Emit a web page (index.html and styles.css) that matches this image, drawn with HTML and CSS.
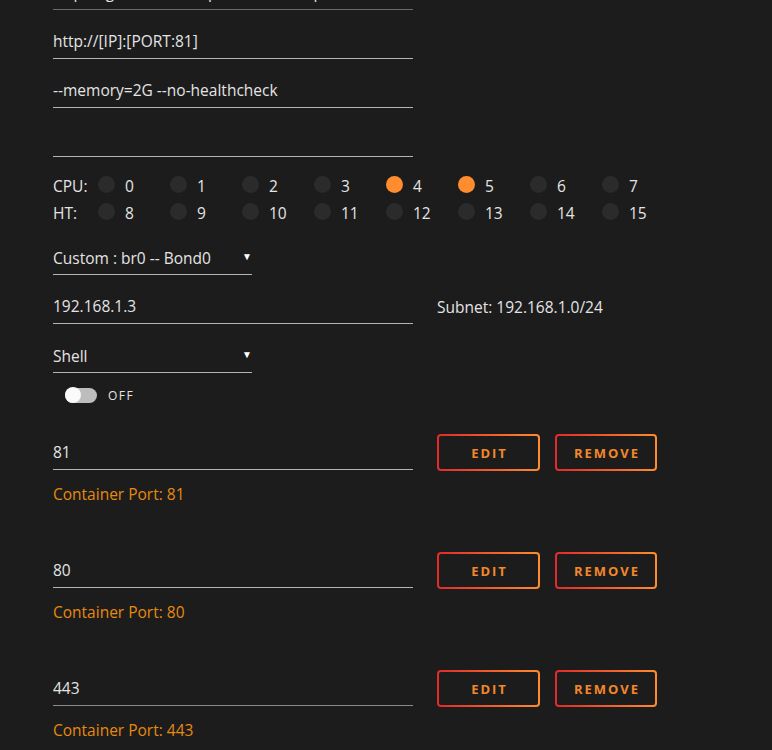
FILE: index.html
```html
<!DOCTYPE html>
<html>
<head>
<meta charset="utf-8">
<link rel="stylesheet" href="styles.css">
</head>
<body>
<div class="page">
  <div class="field dim first"><span class="val">https://github.com/repo/unraid-templates/raw/master/img/icon.png</span></div>
  <div class="field"><span class="val">http://[IP]:[PORT:81]</span></div>
  <div class="field"><span class="val">--memory=2G --no-healthcheck</span></div>
  <div class="field"><span class="val"></span></div>

  <div class="cpus">
    <div class="cpu-row">
      <span class="cpu-label">CPU:</span>
      <span class="core"><i class="dot"></i>0</span>
      <span class="core"><i class="dot"></i>1</span>
      <span class="core"><i class="dot"></i>2</span>
      <span class="core"><i class="dot"></i>3</span>
      <span class="core"><i class="dot on"></i>4</span>
      <span class="core"><i class="dot on"></i>5</span>
      <span class="core"><i class="dot"></i>6</span>
      <span class="core"><i class="dot"></i>7</span>
    </div>
    <div class="cpu-row">
      <span class="cpu-label">HT:</span>
      <span class="core"><i class="dot"></i>8</span>
      <span class="core"><i class="dot"></i>9</span>
      <span class="core"><i class="dot"></i>10</span>
      <span class="core"><i class="dot"></i>11</span>
      <span class="core"><i class="dot"></i>12</span>
      <span class="core"><i class="dot"></i>13</span>
      <span class="core"><i class="dot"></i>14</span>
      <span class="core"><i class="dot"></i>15</span>
    </div>
  </div>

  <div class="field select"><span class="val">Custom : br0 -- Bond0</span><span class="arrow">▼</span></div>
  <div class="row">
    <div class="field"><span class="val">192.168.1.3</span></div>
    <span class="note">Subnet: 192.168.1.0/24</span>
  </div>
  <div class="field select"><span class="val">Shell</span><span class="arrow">▼</span></div>
  <div class="toggle-row">
    <span class="switch"><span class="knob"></span></span>
    <span class="toggle-text">OFF</span>
  </div>

  <div class="port">
    <div class="row">
      <div class="field"><span class="val">81</span></div>
      <button class="btn">EDIT</button>
      <button class="btn">REMOVE</button>
    </div>
    <div class="hint">Container Port: 81</div>
  </div>
  <div class="port">
    <div class="row">
      <div class="field"><span class="val">80</span></div>
      <button class="btn">EDIT</button>
      <button class="btn">REMOVE</button>
    </div>
    <div class="hint">Container Port: 80</div>
  </div>
  <div class="port">
    <div class="row">
      <div class="field mid"><span class="val">443</span></div>
      <button class="btn">EDIT</button>
      <button class="btn">REMOVE</button>
    </div>
    <div class="hint">Container Port: 443</div>
  </div>
</div>
</body>
</html>
```
FILE: styles.css
```css
html, body {
  margin: 0;
  padding: 0;
  background: #1c1c1c;
  overflow: hidden;
}
.page {
  margin-top: -25px;
  padding-left: 53px;
  font-family: "Open Sans", "Noto Sans", sans-serif;
  font-size: 15.5px;
  color: #e4e4e4;
}
.field {
  width: 360px;
  height: 34px;
  border-bottom: 1px solid #b4b4b4;
  display: flex;
  align-items: center;
  justify-content: space-between;
  margin-bottom: 14px;
  box-sizing: content-box;
  white-space: nowrap;
  overflow: hidden;
}
.field.first { align-items: flex-end; height: 32px; padding-top: 2px; }
.field.first .val { margin-bottom: 6px; }
.field.dim { border-bottom-color: #6a6a6a; }
.field.mid { border-bottom-color: #8a8a8a; }
.field.select { width: 199px; margin-bottom: 14px; }
.field.select .val { margin-top: 2px; }
.arrow {
  font-size: 10px;
  color: #fff;
  padding-right: 0;
  margin-top: -3px;
}
.cpus { margin-bottom: 13px; }
.cpu-row {
  display: flex;
  align-items: center;
  height: 28px;
  padding-top: 1px;
}
.cpu-row + .cpu-row { padding-top: 0; margin-top: -1px; }
.cpu-label { width: 45px; }
.core {
  width: 72px;
  display: flex;
  align-items: center;
  gap: 10px;
}
.dot {
  width: 17px;
  height: 17px;
  border-radius: 50%;
  background: #2b2b2b;
  margin-top: -3px;
}
.dot.on { background: #ff8c2f; }
.row {
  display: flex;
  align-items: center;
  gap: 0;
}
.row .field { margin-bottom: 0; margin-right: 24px; }
.row + .field { margin-top: 14px; }
.note { color: #e4e4e4; }
.toggle-row {
  display: flex;
  align-items: center;
  height: 20px;
  margin-top: -2px;
  margin-left: 12px;
}
.switch {
  width: 32px;
  height: 15px;
  border-radius: 8px;
  background: #bdbdbd;
  display: flex;
  align-items: center;
}
.knob {
  width: 16px;
  height: 16px;
  border-radius: 50%;
  background: #fafafa;
}
.toggle-text {
  margin-left: 11px;
  font-size: 12px;
  letter-spacing: 1.5px;
  color: #e4e4e4;
}
.port { margin-top: 29px; }
.port + .port { margin-top: 48px; }
.btn {
  height: 37px;
  width: 103px;
  border: 2px solid transparent;
  border-radius: 4px;
  background: linear-gradient(#1c1c1c, #1c1c1c) padding-box,
              linear-gradient(to right, #e22a2a, #ff8c2f) border-box;
  color: #f2882c;
  font-family: "Open Sans", sans-serif;
  font-weight: bold;
  font-size: 13px;
  letter-spacing: 2px;
  padding: 0 0 0 2px;
  margin-right: 15px;
}
.btn + .btn { width: 102px; }
.hint {
  margin-top: 13px;
  line-height: 20px;
  color: #e68a0e;
}
```
